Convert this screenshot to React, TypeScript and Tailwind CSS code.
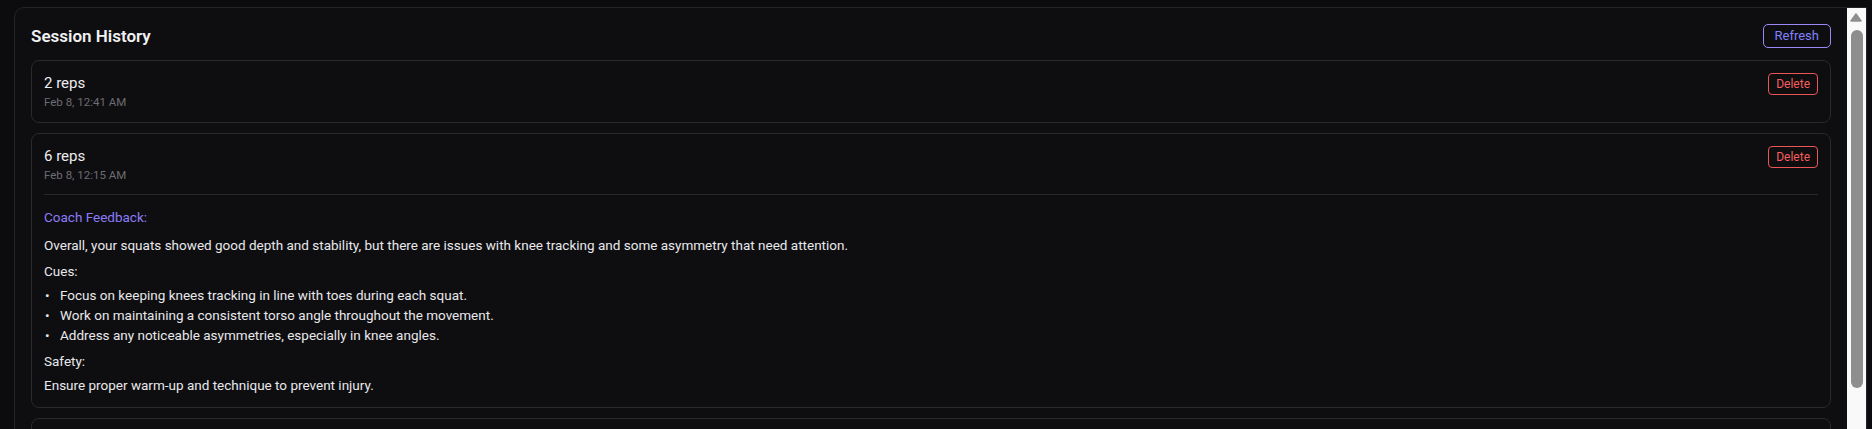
type Feedback = {
  summary: string;
  cues: string[];
  safety: string;
};

type Session = {
  id: number;
  reps: number;
  date: string;
  feedback?: Feedback;
};

const sessions: Session[] = [
  { id: 1, reps: 2, date: 'Feb 8, 12:41 AM' },
  {
    id: 2,
    reps: 6,
    date: 'Feb 8, 12:15 AM',
    feedback: {
      summary:
        'Overall, your squats showed good depth and stability, but there are issues with knee tracking and some asymmetry that need attention.',
      cues: [
        'Focus on keeping knees tracking in line with toes during each squat.',
        'Work on maintaining a consistent torso angle throughout the movement.',
        'Address any noticeable asymmetries, especially in knee angles.',
      ],
      safety: 'Ensure proper warm-up and technique to prevent injury.',
    },
  },
  { id: 3, reps: 4, date: 'Feb 7, 11:58 PM' },
];

function FeedbackBlock({ feedback }: { feedback: Feedback }) {
  return (
    <div className="mt-[11px] border-t border-[#28282c] pt-3 text-[13.5px] leading-5 text-[#e8e8eb]">
      <div className="mb-2 text-[#8b7cf6]">Coach Feedback:</div>
      <p>{feedback.summary}</p>
      <div className="mt-1.5 mb-1">Cues:</div>
      <ul>
        {feedback.cues.map((cue) => (
          <li key={cue} className="flex">
            <span className="w-4 shrink-0 pl-px">•</span>
            <span>{cue}</span>
          </li>
        ))}
      </ul>
      <div className="mt-1.5 mb-1">Safety:</div>
      <p>{feedback.safety}</p>
    </div>
  );
}

function SessionCard({ session }: { session: Session }) {
  return (
    <div className="rounded-lg border border-[#2a2a2e] bg-[#0e0e10] p-3">
      <div className="flex items-start justify-between">
        <div>
          <div className="text-[15px] leading-5 text-[#ededf0]">{session.reps} reps</div>
          <div className="mt-px text-[11.5px] leading-4 text-[#6c6c74]">{session.date}</div>
        </div>
        <button className="h-[22px] rounded-[4px] border border-[#ea5555] px-[7px] text-[12px] leading-5 text-[#f75d5d]">
          Delete
        </button>
      </div>
      {session.feedback && <FeedbackBlock feedback={session.feedback} />}
    </div>
  );
}

// panel scrollbar: light track, up arrow, rounded grey thumb
function Scrollbar() {
  return (
    <div className="w-[19px] shrink-0 bg-[#f9f9f9] pt-[5px]">
      <svg viewBox="0 0 12 9" className="ml-[3px] block h-[9px] w-[12px]">
        <path d="M6 1 L11 8 L1 8 Z" fill="#8e8e8e" stroke="#8e8e8e" strokeWidth="1.5" strokeLinejoin="round" />
      </svg>
      <div className="mt-2 ml-1 h-[358px] w-3 rounded-full bg-[#8e8e8e]" />
    </div>
  );
}

export default function App() {
  return (
    <div className="h-[429px] overflow-hidden bg-[#0c0c0e] pt-[7px] pr-[5px] pl-[14px] font-[family-name:Roboto,sans-serif]">
      <section className="flex h-[473px] rounded-[10px] rounded-tr-none border border-[#242428] bg-[#0e0e10]">
        <div className="min-w-0 flex-1 overflow-hidden p-4">
          <div className="mb-3 flex items-center justify-between">
            <h2 className="text-[17px] leading-6 font-semibold text-[#f1f1f3]">Session History</h2>
            <button className="flex h-6 items-center rounded-[5px] border border-[#9c88f8] px-[11px] text-[13px] text-[#8180fa]">
              Refresh
            </button>
          </div>
          <div className="flex flex-col gap-[10px]">
            {sessions.map((s) => (
              <SessionCard key={s.id} session={s} />
            ))}
          </div>
        </div>
        <Scrollbar />
      </section>
    </div>
  );
}
